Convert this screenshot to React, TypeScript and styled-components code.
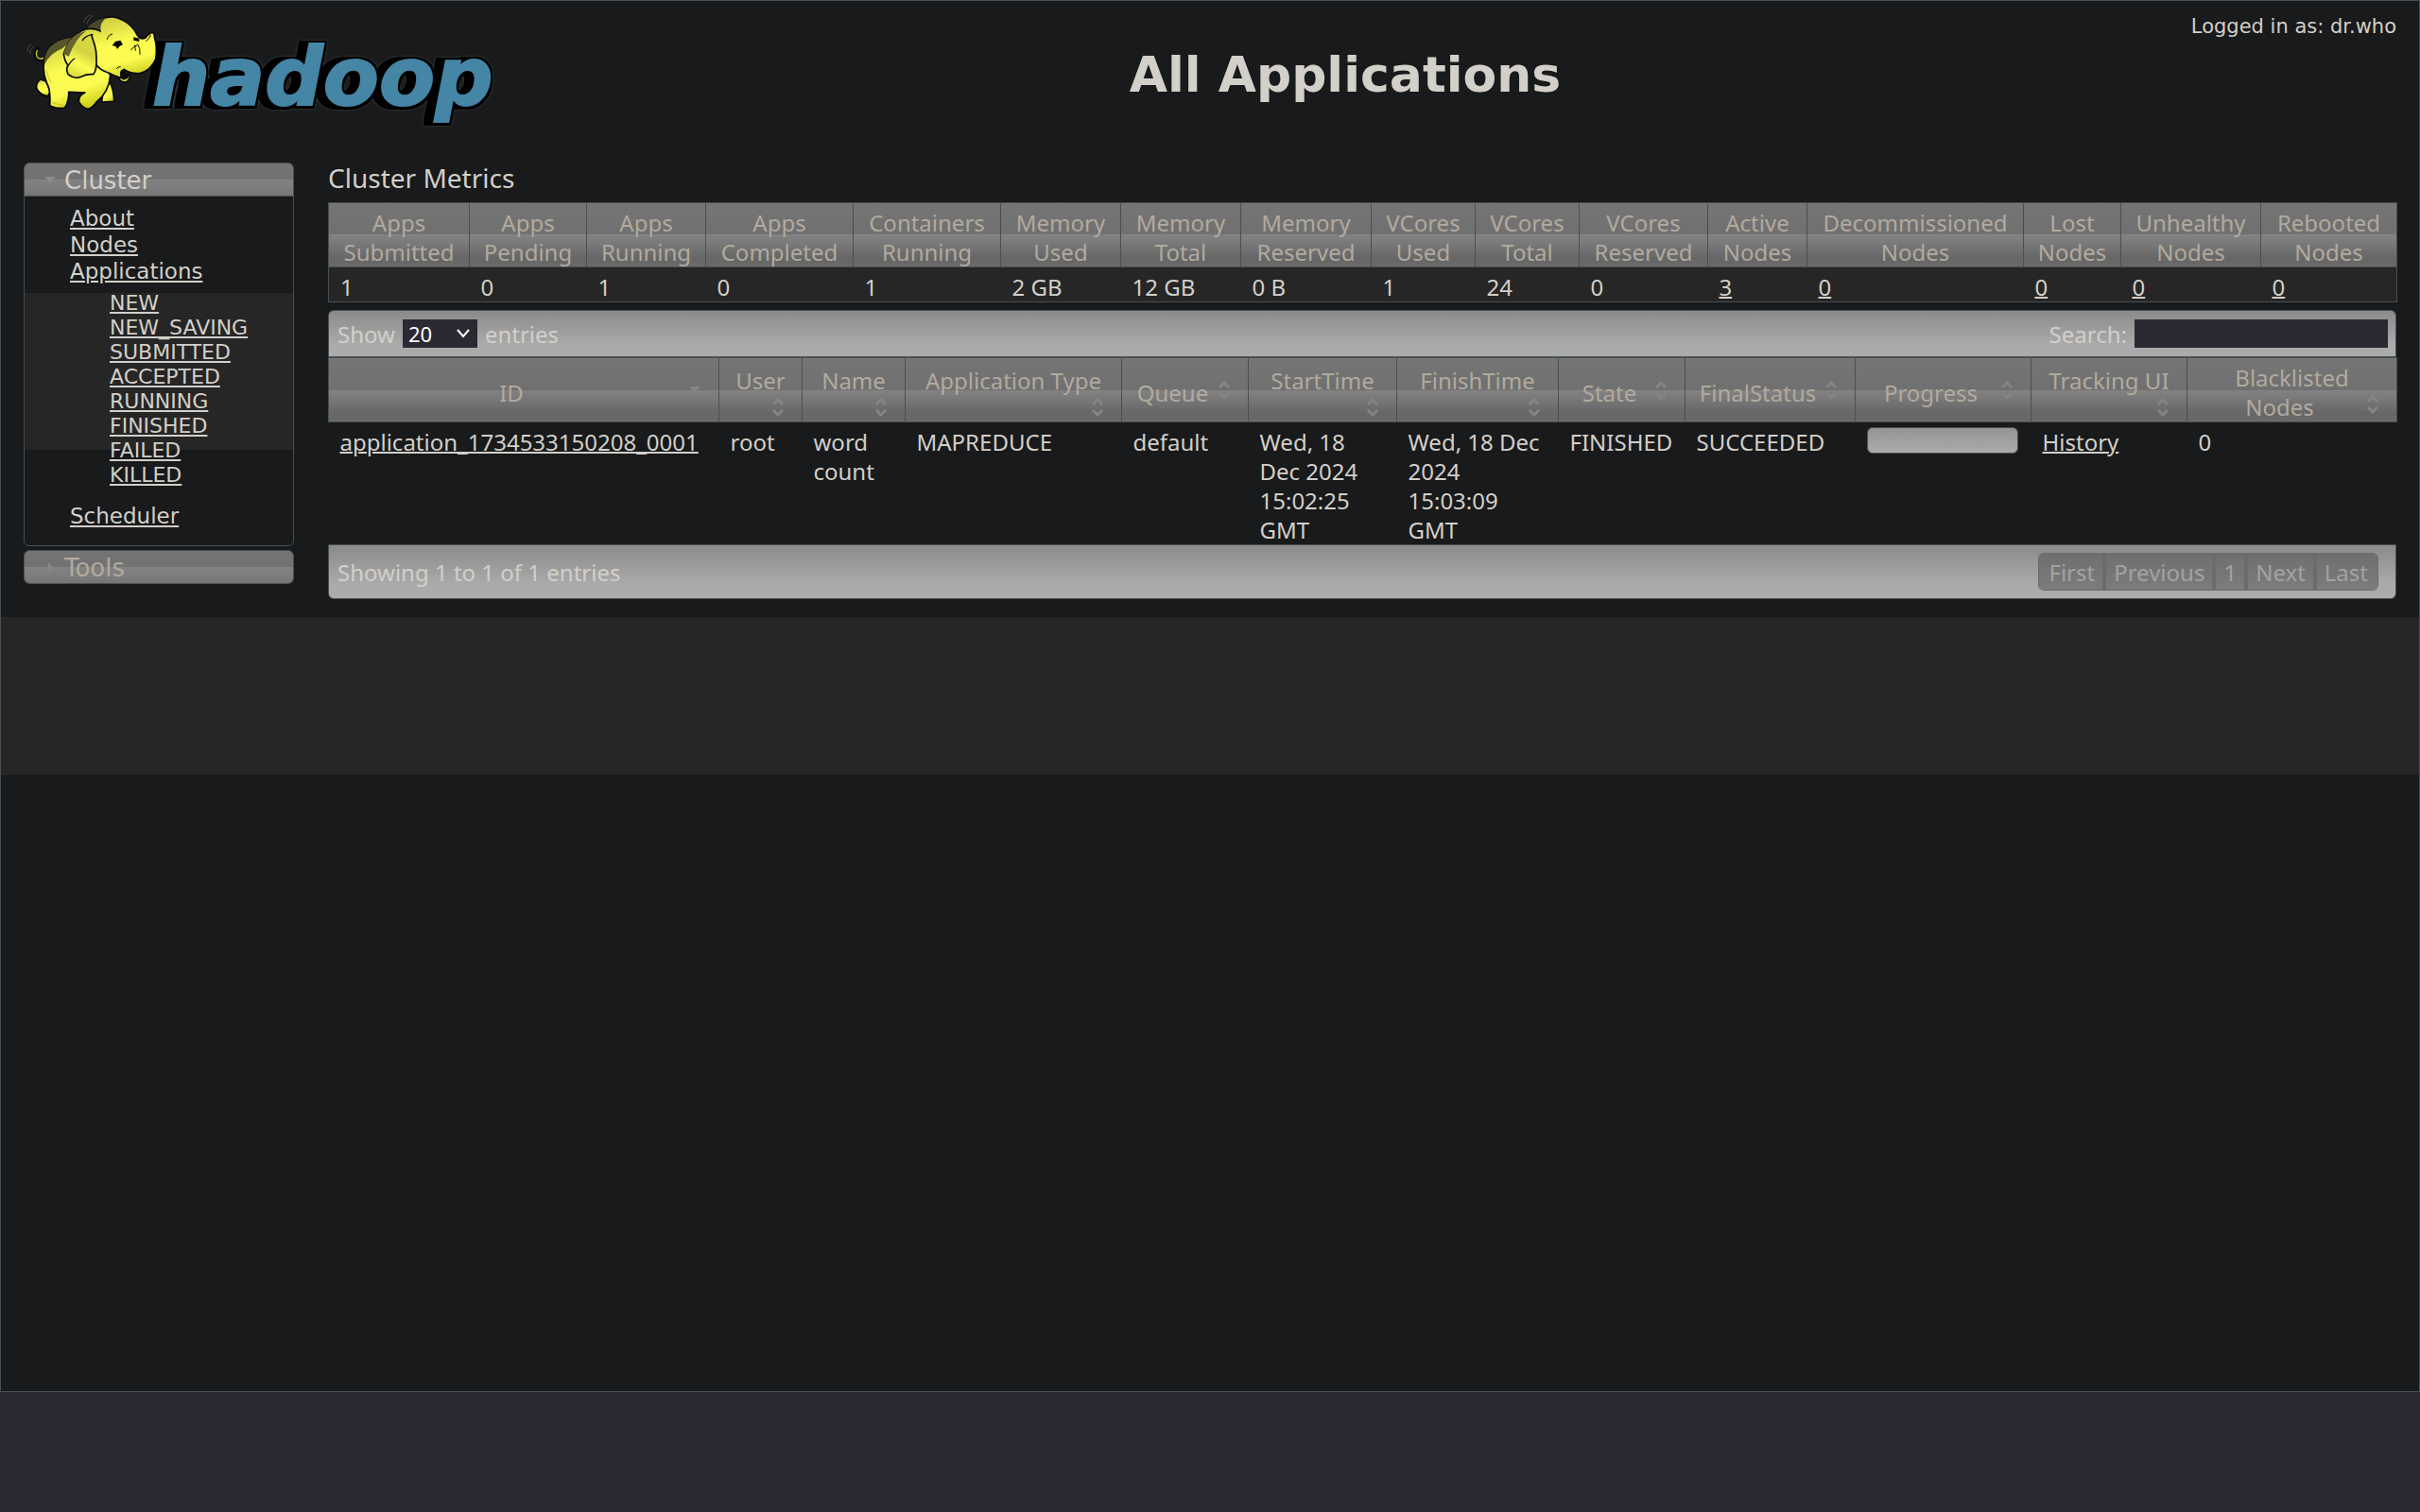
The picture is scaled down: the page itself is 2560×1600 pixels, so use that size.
import React from "react";
import styled, { createGlobalStyle, css } from "styled-components";

const sans = `"Noto Sans", "Open Sans", sans-serif`;
const verdana = `"DejaVu Sans", Verdana, sans-serif`;
const line = "#484f53";
const ink = "#d3cfc9";
const muted = "#b2aa9e";

const barGradient = css`
  background: linear-gradient(#8a8a8a 0%, #9c9c9c 40%, #ababab 75%, #ababab 100%);
`;
const headGradient = css`
  background: linear-gradient(#757575 0%, #707070 50%, #838383 50%, #666666 88%, #6a6a6a 100%);
`;

const GlobalStyle = createGlobalStyle`
  *, *::before, *::after { box-sizing: border-box; }
  body { margin: 0; background: #2b2a33; color: ${ink}; font-family: ${sans}; font-size: 24px; line-height: 31px; }
  a { color: ${ink}; }
  ul { list-style: none; margin: 0; padding: 0; }
`;

const Frame = styled.div`
  min-height: calc(100vh - 127px);
  margin-bottom: 127px;
  border: 1px solid ${line};
  background: #181a1b;
`;

const Header = styled.header`
  display: grid;
  grid-template-columns: 286px 1fr;
  height: 171px;
`;

const LogoLink = styled.a`
  grid-area: 1 / 1;
  width: 560px;
  svg { display: block; }
`;

const Wordmark = styled.text`
  fill: #4585a5;
  stroke: #4585a5;
  stroke-width: 2px;
  font: italic bold 86px ${verdana};
  filter: drop-shadow(2px 0 0 #000) drop-shadow(0 3px 0 #000) drop-shadow(0 -2px 0 #000) drop-shadow(-5px 0 0 #000)
    drop-shadow(-5px 0 0 #000) drop-shadow(0 0 1px #4a4a4a);
`;

const PageTitle = styled.h1`
  grid-area: 1 / 2;
  justify-self: center;
  margin: 48px 0 0;
  font: bold 52px/60px ${verdana};
`;

const UserInfo = styled.div`
  grid-area: 1 / 2;
  justify-self: end;
  align-self: start;
  padding: 15px 24px 0 0;
  font: 21px/24px ${verdana};
`;

const Main = styled.div`
  display: grid;
  grid-template-columns: 286px minmax(0, 1fr);
  column-gap: 36px;
  align-items: start;
  padding: 0 24px 19px;
`;

const Nav = styled.nav`
  display: flex;
  flex-direction: column;
  gap: 4px;
  font-family: ${verdana};
`;

const Panel = styled.section`
  overflow: hidden;
  border: 1px solid ${line};
  border-radius: 6px;
`;

const PanelToggle = styled.button<{ $open?: boolean }>`
  display: flex;
  align-items: center;
  gap: 8px;
  width: 100%;
  height: ${p => (p.$open ? 35 : 34)}px;
  padding: 2px 0 0 20px;
  border: 0;
  border-bottom: ${p => (p.$open ? `1px solid ${line}` : "0")};
  background: linear-gradient(#747474 0%, #717171 50%, #838383 50%, #767676 100%);
  color: ${p => (p.$open ? ink : muted)};
  font: 26px/32px ${verdana};
  text-align: left;
`;

const PanelBody = styled.div`
  padding: 9px 0 17px 48px;
  font-size: 23px;
  line-height: 28px;
`;

const StateList = styled.ul`
  margin: 7px 0 16px -48px;
  padding-left: 90px;
  background: linear-gradient(#262626, #262626) no-repeat 0 2px / 100% 166px;
  font-size: 22px;
  line-height: 26px;
`;

const Content = styled.main`
  min-width: 0;
`;

const SectionTitle = styled.h2`
  margin: 0 0 10px;
  font-size: 28px;
  font-weight: 400;
  line-height: 32px;
`;

const Table = styled.table`
  width: 100%;
  table-layout: fixed;
  border-collapse: collapse;
`;

const HeadCell = styled.th`
  height: 68px;
  padding: 5px 12px 0;
  border: 1px solid ${line};
  ${headGradient}
  background-clip: padding-box;
  color: ${muted};
  font-weight: 400;
  text-align: center;
  vertical-align: middle;
`;

const MetricHeadCell = styled(HeadCell)`
  padding: 5px 4px 0;
`;

const Cell = styled.td`
  padding: 5px 12px 0;
  vertical-align: top;
  a { text-decoration-thickness: 2px; }
`;

const ValueCell = styled(Cell)`
  padding-right: 0;
`;

const MetricsTable = styled(Table)`
  margin-bottom: 8px;
  border: 1px solid ${line};
  tbody { background: #262626; }
`;

const SortMark = styled.span`
  float: right;
  display: grid;
  place-items: center;
  width: 26px;
  height: 26px;
`;

const Bar = styled.div<{ $end?: boolean }>`
  display: flex;
  align-items: center;
  justify-content: space-between;
  height: ${p => (p.$end ? 58 : 50)}px;
  padding: 0 ${p => (p.$end ? 18 : 8)}px 0 9px;
  border: 1px solid ${line};
  border-radius: ${p => (p.$end ? "0 0 6px 6px" : "6px 6px 0 0")};
  ${barGradient}
`;

const Field = styled.label`
  display: flex;
  align-items: center;
  gap: 8px;
`;

const SelectBox = styled.span`
  display: grid;
  align-items: center;
  width: 79px;
  select, svg { grid-area: 1 / 1; }
  svg { justify-self: end; margin-right: 8px; pointer-events: none; }
`;

const Select = styled.select`
  appearance: none;
  width: 100%;
  height: 30px;
  padding: 0 0 0 6px;
  border: 0;
  border-radius: 0;
  background: #2b2a33;
  color: #fff;
  font: 22px/30px ${sans};
`;

const SearchInput = styled.input`
  width: 268px;
  height: 30px;
  padding: 0 6px;
  border: 0;
  background: #2b2a33;
  color: #fff;
  font: 22px/30px ${sans};
`;

const Progress = styled.div`
  width: 160px;
  height: 28px;
  border: 1px solid ${line};
  border-radius: 6px;
  background: linear-gradient(#949494, #ababab);
`;

const Pager = styled.div`
  display: flex;
  overflow: hidden;
  border-radius: 6px;
`;

const PageButton = styled.button`
  height: 40px;
  padding: 0 8px;
  border: 1px solid #6a6b6c;
  border-width: 1px 2px;
  background: linear-gradient(#6e6f70, #7c7c7d);
  color: #a5a29e;
  font: 24px/31px ${sans};
  &:first-child { border-left-width: 1px; padding-left: 10px; }
  &:last-child { border-right-width: 1px; padding-right: 10px; }
`;

const Band = styled.footer`
  height: 167px;
  background: #262626;
`;

function Logo() {
  return (
    <svg width="560" height="160" viewBox="1 1 560 160" role="img" aria-label="Hadoop">
      <defs>
        <linearGradient id="hide" x1="0.2" y1="0" x2="0.5" y2="1">
          <stop offset="0" stopColor="#c9c93f" />
          <stop offset="0.45" stopColor="#fbfb52" />
          <stop offset="0.75" stopColor="#fbfb52" />
          <stop offset="1" stopColor="#d2d21c" />
        </linearGradient>
        <linearGradient id="ear" x1="0.8" y1="0" x2="0.4" y2="1">
          <stop offset="0" stopColor="#d9d946" />
          <stop offset="0.5" stopColor="#d4d443" />
          <stop offset="0.75" stopColor="#fdfd55" />
          <stop offset="1" stopColor="#dede3c" />
        </linearGradient>
      </defs>
      <Wordmark x="161" y="111">hadoop</Wordmark>
      <g transform="scale(0.33333)" stroke="#080808" strokeWidth="5" strokeLinejoin="round" strokeLinecap="round" fill="url(#hide)">
        <path d="M128 252 Q110 268 118 284 Q132 304 152 305 L160 290 L146 258 Z" />
        <path d="M350 262 Q362 290 362 322 L322 324 L330 280 Z" />
        <path d="M140 186 Q128 194 118 188 Q108 176 114 160 L120 154" fill="none" strokeWidth="9" />
        <path d="M138 184 Q128 190 119 183 Q112 172 118 160" fill="none" stroke="#c9c934" strokeWidth="4" />
        <path d="M376 236 Q374 258 396 261 Q412 258 413 238 L400 226 Z" />
        <path d="M238 118 Q168 124 148 166 Q128 214 148 262 Q162 286 158 334 Q172 346 206 342 Q220 316 218 292 L270 294 Q250 302 250 322 Q262 344 280 346 Q294 342 306 324 Q346 292 350 240 L300 130 Z" />
        <path d="M238 118 Q168 124 148 166 Q140 184 140 206 Q160 168 198 154 Z" fill="#55552a" stroke="none" />
        <path d="M286 92 Q316 50 360 54 Q412 64 436 112 Q446 128 462 120 Q474 104 484 103 Q490 104 490 118 Q500 150 494 188 Q478 224 446 232 Q416 236 394 220 Q378 226 386 248 Q360 240 346 232 Q316 222 304 204 Q280 150 286 92 Z" />
        <path d="M274 92 Q298 60 340 56 Q314 68 320 104 Q302 84 274 92 Z" fill="#47472a" stroke="none" />
        <path d="M318 98 Q286 84 258 98 Q218 118 202 170 Q204 192 216 208 Q208 216 216 236 Q236 252 258 244 Q272 234 296 236 Q308 224 306 184 Q306 160 300 142 L290 110" fill="url(#ear)" />
        <path d="M202 170 Q212 126 248 106 L274 98 Q240 120 218 180 Z" fill="#66662c" stroke="none" />
        <path d="M216 208 Q226 192 236 186 M262 128 Q272 112 294 110" fill="none" strokeWidth="4" />
        <path d="M384 222 L412 236 Q410 252 390 254 Q378 240 384 222 Z" fill="#080808" stroke="none" />
        <path d="M370 218 Q374 210 382 212 M340 124 Q344 110 356 108 M416 158 Q424 146 438 142 Q446 154 444 172 M428 144 L430 160 M464 130 Q474 124 478 112" fill="none" strokeWidth="3" />
        <path d="M356 144 L366 132 L382 128 L390 142 L380 146 L372 156 L368 148 Z M424 118 L442 122 L442 132 L424 128 Z" fill="#080808" stroke="none" />
        <path d="M266 70 Q270 54 286 48 M276 74 Q280 58 294 50 M88 164 Q84 150 98 142 M96 172 Q94 156 106 148" fill="none" stroke="#4a4a4a" strokeWidth="3" />
        <path d="M166 326 L204 336 M262 326 L282 340 M162 262 Q150 240 148 226" fill="none" stroke="#c5c51c" strokeWidth="3" />
      </g>
    </svg>
  );
}

function SortIcon({ sorted }: { sorted?: boolean }) {
  return (
    <SortMark>
      <svg width="14" height="20" viewBox="0 0 14 20" fill="none" stroke="#858585" strokeWidth="3" aria-hidden="true">
        {sorted ? <path d="M1 6h12L7 13Z" fill="#858585" stroke="none" /> : <path d="M2 7l5-5 5 5M2 13l5 5 5-5" />}
      </svg>
    </SortMark>
  );
}

const metrics: [string, string, string, number, boolean?][] = [
  ["Apps", "Submitted", "1", 149],
  ["Apps", "Pending", "0", 124],
  ["Apps", "Running", "1", 126],
  ["Apps", "Completed", "0", 156],
  ["Containers", "Running", "1", 156],
  ["Memory", "Used", "2 GB", 127],
  ["Memory", "Total", "12 GB", 127],
  ["Memory", "Reserved", "0 B", 138],
  ["VCores", "Used", "1", 110],
  ["VCores", "Total", "24", 110],
  ["VCores", "Reserved", "0", 136],
  ["Active", "Nodes", "3", 105, true],
  ["Decommissioned", "Nodes", "0", 229, true],
  ["Lost", "Nodes", "0", 103, true],
  ["Unhealthy", "Nodes", "0", 148, true],
  ["Rebooted", "Nodes", "0", 144, true],
];

const columns: [string, number][] = [
  ["ID", 413],
  ["User", 88],
  ["Name", 109],
  ["Application Type", 229],
  ["Queue", 134],
  ["StartTime", 157],
  ["FinishTime", 171],
  ["State", 134],
  ["FinalStatus", 180],
  ["Progress", 186],
  ["Tracking UI", 165],
  ["Blacklisted Nodes", 222],
];

const states = ["NEW", "NEW_SAVING", "SUBMITTED", "ACCEPTED", "RUNNING", "FINISHED", "FAILED", "KILLED"];

export default function App() {
  return (
    <>
      <GlobalStyle />
      <Frame>
        <Header>
          <LogoLink href="#"><Logo /></LogoLink>
          <PageTitle>All Applications</PageTitle>
          <UserInfo>Logged in as: dr.who</UserInfo>
        </Header>
        <Main>
          <Nav>
            <Panel>
              <PanelToggle $open aria-expanded="true">
                <svg width="14" height="14" viewBox="0 0 14 14" aria-hidden="true"><path d="M1 3h12L7 10Z" fill="#8c8c8c" /></svg>
                Cluster
              </PanelToggle>
              <PanelBody>
                <ul>
                  <li><a href="#">About</a></li>
                  <li><a href="#">Nodes</a></li>
                  <li>
                    <a href="#">Applications</a>
                    <StateList>
                      {states.map(s => <li key={s}><a href="#">{s}</a></li>)}
                    </StateList>
                  </li>
                  <li><a href="#">Scheduler</a></li>
                </ul>
              </PanelBody>
            </Panel>
            <Panel>
              <PanelToggle aria-expanded="false">
                <svg width="14" height="14" viewBox="0 0 14 14" aria-hidden="true"><path d="M5 1v12l6-6Z" fill="#868686" /></svg>
                Tools
              </PanelToggle>
            </Panel>
          </Nav>
          <Content>
            <SectionTitle>Cluster Metrics</SectionTitle>
            <MetricsTable>
              <colgroup>{metrics.map((m, i) => <col key={i} width={m[3]} />)}</colgroup>
              <thead>
                <tr>{metrics.map((m, i) => <MetricHeadCell key={i}>{m[0]}<br />{m[1]}</MetricHeadCell>)}</tr>
              </thead>
              <tbody>
                <tr>{metrics.map((m, i) => <ValueCell key={i}>{m[4] ? <a href="#">{m[2]}</a> : m[2]}</ValueCell>)}</tr>
              </tbody>
            </MetricsTable>
            <Bar>
              <Field>
                Show
                <SelectBox>
                  <Select defaultValue="20">
                    <option>20</option>
                    <option>40</option>
                    <option>60</option>
                    <option>80</option>
                    <option>100</option>
                  </Select>
                  <svg width="14" height="10" viewBox="0 0 14 10" fill="none" stroke="#fff" strokeWidth="2" aria-hidden="true"><path d="M1 1l6 7 6-7" /></svg>
                </SelectBox>
                entries
              </Field>
              <Field>
                Search:
                <SearchInput type="text" />
              </Field>
            </Bar>
            <Table>
              <colgroup>{columns.map(c => <col key={c[0]} width={c[1]} />)}</colgroup>
              <thead>
                <tr>{columns.map((c, i) => <HeadCell key={c[0]}>{c[0]}<SortIcon sorted={i === 0} /></HeadCell>)}</tr>
              </thead>
              <tbody>
                <tr>
                  <Cell><a href="#">application_1734533150208_0001</a></Cell>
                  <Cell>root</Cell>
                  <Cell>word count</Cell>
                  <Cell>MAPREDUCE</Cell>
                  <Cell>default</Cell>
                  <Cell>Wed, 18 Dec 2024 15:02:25 GMT</Cell>
                  <Cell>Wed, 18 Dec 2024 15:03:09 GMT</Cell>
                  <Cell>FINISHED</Cell>
                  <Cell>SUCCEEDED</Cell>
                  <Cell><Progress role="progressbar" aria-label="Progress" /></Cell>
                  <Cell><a href="#">History</a></Cell>
                  <Cell>0</Cell>
                </tr>
              </tbody>
            </Table>
            <Bar $end>
              <span>Showing 1 to 1 of 1 entries</span>
              <Pager>
                {["First", "Previous", "1", "Next", "Last"].map(p => <PageButton key={p}>{p}</PageButton>)}
              </Pager>
            </Bar>
          </Content>
        </Main>
        <Band />
      </Frame>
    </>
  );
}
